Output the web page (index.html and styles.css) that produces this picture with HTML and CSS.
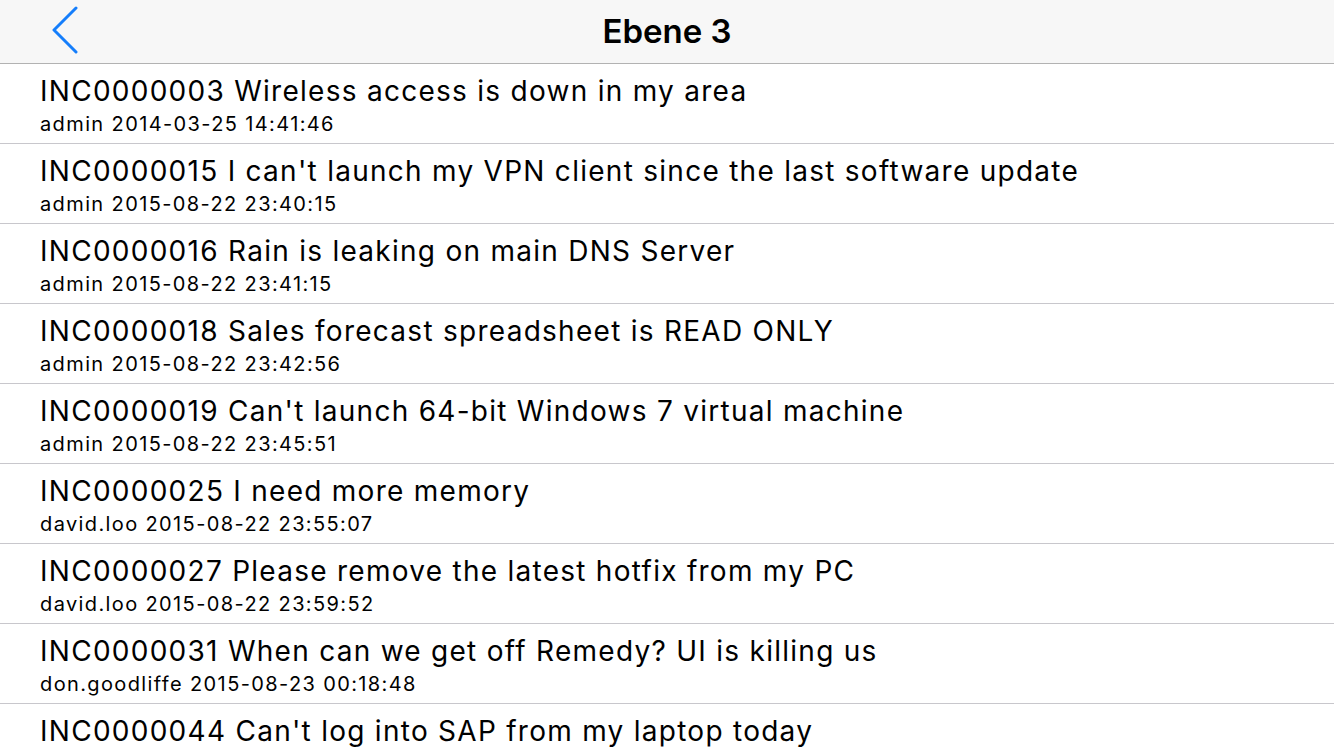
FILE: index.html
```html
<!DOCTYPE html>
<html>
<head>
<meta charset="utf-8">
<link rel="stylesheet" href="styles.css">
</head>
<body>
<header class="navbar">
  <a class="back" href="#"><svg width="30" height="48" viewBox="0 0 30 48"><polyline points="24,2 2,24 24,46" fill="none" stroke="#157efb" stroke-width="3" stroke-linecap="round" stroke-linejoin="round"/></svg></a>
  <h1 class="title">Ebene 3</h1>
</header>
<ul class="list">
  <li class="row"><div class="row-title">INC0000003 Wireless access is down in my area</div><div class="row-sub">admin 2014-03-25 14:41:46</div></li>
  <li class="row"><div class="row-title">INC0000015 I can't launch my VPN client since the last software update</div><div class="row-sub">admin 2015-08-22 23:40:15</div></li>
  <li class="row"><div class="row-title">INC0000016 Rain is leaking on main DNS Server</div><div class="row-sub">admin 2015-08-22 23:41:15</div></li>
  <li class="row"><div class="row-title">INC0000018 Sales forecast spreadsheet is READ ONLY</div><div class="row-sub">admin 2015-08-22 23:42:56</div></li>
  <li class="row"><div class="row-title">INC0000019 Can't launch 64-bit Windows 7 virtual machine</div><div class="row-sub">admin 2015-08-22 23:45:51</div></li>
  <li class="row"><div class="row-title">INC0000025 I need more memory</div><div class="row-sub">david.loo 2015-08-22 23:55:07</div></li>
  <li class="row"><div class="row-title">INC0000027 Please remove the latest hotfix from my PC</div><div class="row-sub">david.loo 2015-08-22 23:59:52</div></li>
  <li class="row"><div class="row-title">INC0000031 When can we get off Remedy? UI is killing us</div><div class="row-sub">don.goodliffe 2015-08-23 00:18:48</div></li>
  <li class="row"><div class="row-title">INC0000044 Can't log into SAP from my laptop today</div><div class="row-sub">admin 2015-08-23 00:20:10</div></li>
</ul>
</body>
</html>
```
FILE: styles.css
```css
html, body {
  margin: 0;
  padding: 0;
  background: #ffffff;
  overflow: hidden;
  height: 750px;
}
body {
  font-family: Inter, "Noto Sans", sans-serif;
  color: #000;
}
.navbar {
  height: 64px;
  background: #f7f7f7;
  border-bottom: 1px solid #b2b2b2;
  box-sizing: border-box;
  display: flex;
  align-items: center;
  justify-content: center;
  position: relative;
}
.back {
  position: absolute;
  left: 52px;
  top: 6px;
  display: block;
  width: 30px;
  height: 48px;
}
.back svg { display: block; }
.title {
  margin: 0;
  font-size: 33px;
  font-weight: 600;
  letter-spacing: 0;
  transform: translateY(-1px);
}
.list {
  list-style: none;
  margin: 0;
  padding: 0;
}
.row {
  height: 80px;
  box-sizing: border-box;
  padding: 10px 0 0 40px;
  border-bottom: 1px solid #c8c7cc;
}
.row-title {
  font-size: 28px;
  line-height: 34px;
  letter-spacing: 1.27px;
  white-space: nowrap;
}
.row-sub {
  margin-top: 4px;
  font-size: 20px;
  line-height: 24px;
  letter-spacing: 1.38px;
  white-space: nowrap;
}
```
